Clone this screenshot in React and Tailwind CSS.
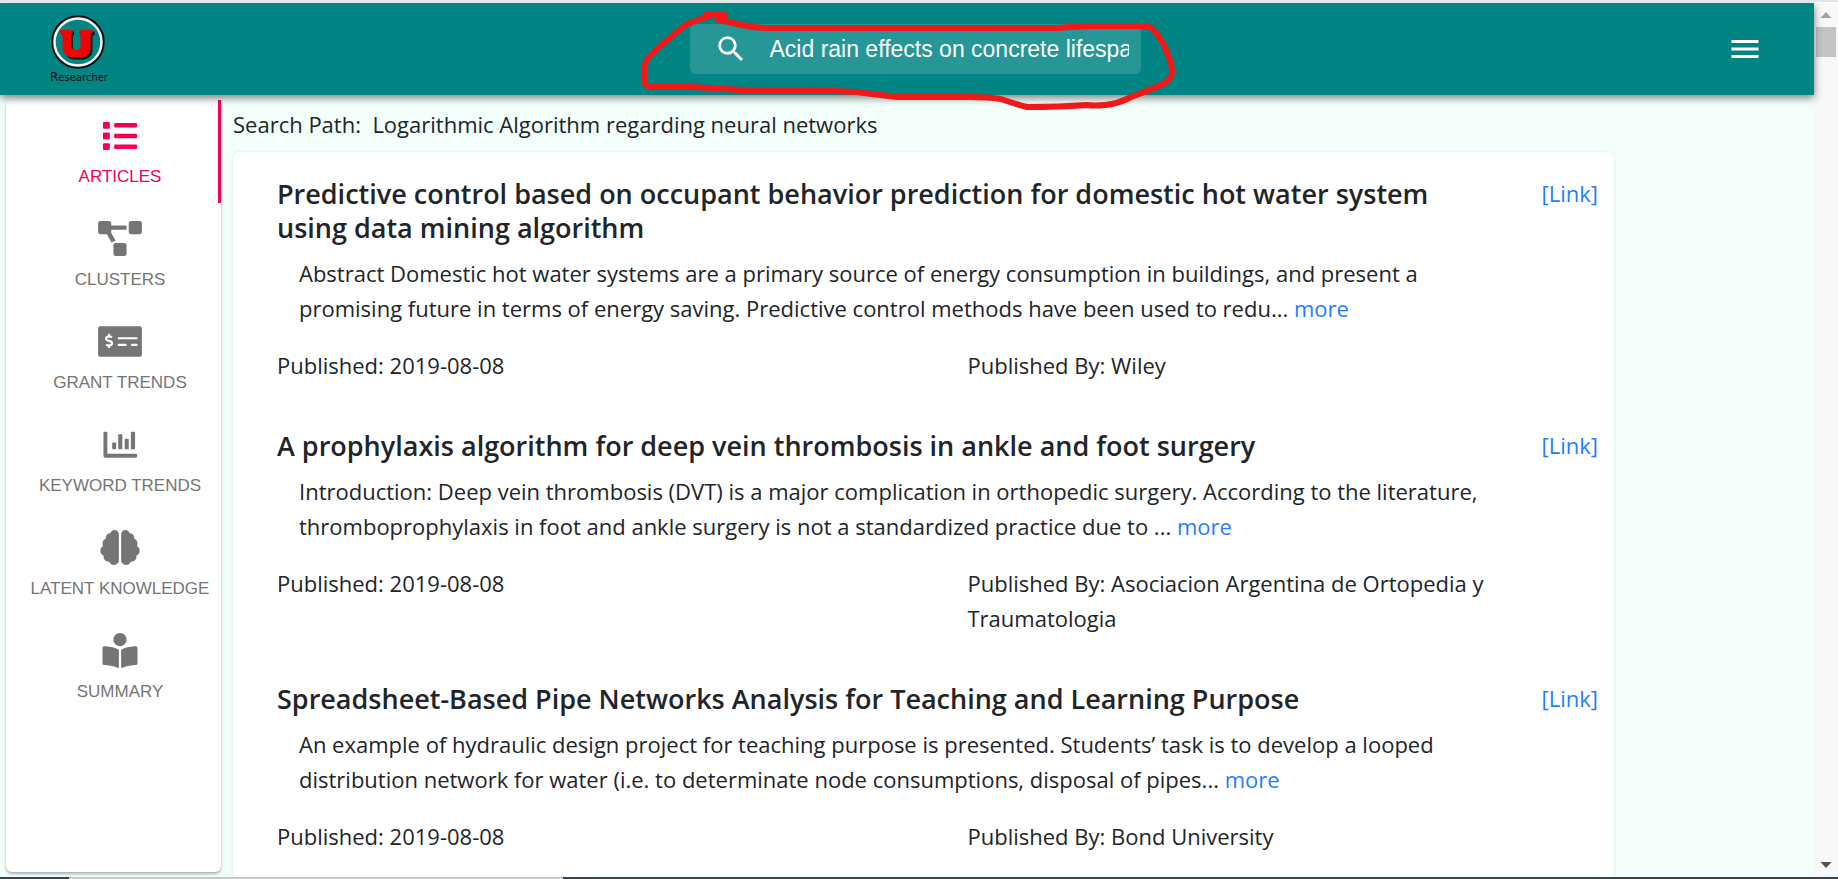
import React from "react";
import { FaProjectDiagram, FaMoneyCheckAlt, FaBrain, FaBookReader } from "react-icons/fa";
import { MdMenu, MdSearch } from "react-icons/md";

const tabs = [
  { label: "Articles", icon: ListIcon, active: true },
  { label: "Clusters", icon: FaProjectDiagram },
  { label: "Grant Trends", icon: FaMoneyCheckAlt },
  { label: "Keyword Trends", icon: ChartIcon },
  { label: "Latent Knowledge", icon: FaBrain },
  { label: "Summary", icon: FaBookReader },
];

const articles = [
  {
    title:
      "Predictive control based on occupant behavior prediction for domestic hot water system using data mining algorithm",
    abstract:
      "Abstract Domestic hot water systems are a primary source of energy consumption in buildings, and present a promising future in terms of energy saving. Predictive control methods have been used to redu...",
    date: "2019-08-08",
    publisher: "Wiley",
  },
  {
    title: "A prophylaxis algorithm for deep vein thrombosis in ankle and foot surgery",
    abstract:
      "Introduction: Deep vein thrombosis (DVT) is a major complication in orthopedic surgery. According to the literature, thromboprophylaxis in foot and ankle surgery is not a standardized practice due to ...",
    date: "2019-08-08",
    publisher: "Asociacion Argentina de Ortopedia y Traumatologia",
  },
  {
    title: "Spreadsheet-Based Pipe Networks Analysis for Teaching and Learning Purpose",
    abstract:
      "An example of hydraulic design project for teaching purpose is presented. Students’ task is to develop a looped distribution network for water (i.e. to determinate node consumptions, disposal of pipes...",
    date: "2019-08-08",
    publisher: "Bond University",
  },
];

function ListIcon({ className }) {
  return (
    <svg viewBox="0 0 36 36" className={className} fill="currentColor" aria-hidden="true">
      <rect x="0.500" y="4" width="7" height="7" rx="1" />
      <rect x="0.500" y="15" width="7" height="7" rx="1" />
      <rect x="0.500" y="26" width="7" height="7" rx="1" />
      <rect x="12" y="5.200" width="23.500" height="4.600" rx="1" />
      <rect x="12" y="16.200" width="23.500" height="4.600" rx="1" />
      <rect x="12" y="27.200" width="23.500" height="4.600" rx="1" />
    </svg>
  );
}

function ChartIcon({ className }) {
  return (
    <svg viewBox="0 0 36 36" className={className} fill="currentColor" aria-hidden="true">
      <path d="M2 5h2a1 1 0 0 1 1 1v21.400h29.500a1 1 0 0 1 1 1v2.200a1 1 0 0 1-1 1H3a2 2 0 0 1-2-2V6a1 1 0 0 1 1-1z" />
      <rect x="10" y="16" width="4" height="7" rx="0.800" />
      <rect x="16.200" y="7.500" width="4.200" height="15.500" rx="0.800" />
      <rect x="22.800" y="12" width="4.200" height="11" rx="0.800" />
      <rect x="29.200" y="5" width="4.300" height="18" rx="0.800" />
    </svg>
  );
}

function Logo() {
  return (
    <svg viewBox="0 0 64 70" className="h-[70px] w-16" role="img" aria-label="U Researcher">
      <circle cx="30" cy="28" r="25.500" fill="none" stroke="#101010" strokeWidth="2.500" />
      <circle cx="30" cy="28" r="23.500" fill="none" stroke="#f2f6f6" strokeWidth="2.500" />
      <path
        d="M14 17.500h12v3.500l-1 1v12.500l2.500 2.500h4l2-2.500V22l-1-1v-3.500h14v3.500l-2 1v14.500q-.500 7-8.500 9H25.500q-8-1.500-9-9V22l-2.500-1z"
        fill="#101010"
      />
      <path
        d="M12 16h12.500v3l-1 1v13q1 3 4.500 3t4.500-3V20l-1.500-1v-3h13.500v3l-2 1v15q-.500 6.500-7.500 8.500H22.500q-7-1.500-8-8.500V20l-2.500-1z"
        fill="#ee0505"
      />
      <text x="2" y="67" fontSize="10" fontFamily="'DejaVu Sans', sans-serif" fill="#101010">
        <tspan fontSize="12">R</tspan>
        <tspan>esearcher</tspan>
      </text>
    </svg>
  );
}

function Header() {
  return (
    <header className="relative z-10 grid h-[92px] shrink-0 grid-cols-[1fr_auto_1fr] items-center bg-[#008484] pl-4 shadow-[0_3px_8px_rgba(0,0,0,0.5)]">
      <div className="pl-8">
        <Logo />
      </div>
      <div role="search" className="flex h-[50px] w-[451px] items-center rounded-md bg-white/15 pr-3 pl-6 text-white">
        <MdSearch className="mr-5 h-[34px] w-[34px] shrink-0" aria-hidden="true" />
        <input
          type="text"
          aria-label="Search"
          defaultValue="Acid rain effects on concrete lifespan"
          className="ml-0.5 w-full min-w-0 bg-transparent text-[23px] text-white outline-none"
        />
      </div>
      <button type="button" aria-label="Menu" className="mr-[51px] justify-self-end text-white">
        <MdMenu className="h-9 w-9" />
      </button>
    </header>
  );
}

function Sidebar() {
  return (
    <nav className="mb-[5px] w-[215px] shrink-0 rounded-md bg-white shadow-[0_2px_3px_rgba(0,0,0,0.3)]">
      {tabs.map(({ label, icon: Icon, active }) => (
        <button
          key={label}
          type="button"
          className={
            "flex h-[103px] w-full flex-col items-center justify-center gap-3 border-r-[3px] pt-1 pl-4 text-[17px] leading-6 whitespace-nowrap uppercase " +
            (active ? "border-[#f50057] text-[#f50057]" : "border-transparent text-[#757575]")
          }
        >
          <Icon className="h-[35px] w-11" />
          <span>{label}</span>
        </button>
      ))}
    </nav>
  );
}

function Article({ title, abstract, date, publisher }) {
  return (
    <article>
      <div className="flex justify-between pr-4 pl-11">
        <div className="max-w-[1212px]">
          <h2 className="text-[27px] leading-[34px] font-semibold">{title}</h2>
          <p className="mt-[11px] pl-[22px] text-[22px] leading-[35px]">
            {abstract}{" "}
            <a href="#more" className="text-[#1f80ff]">
              more
            </a>
          </p>
        </div>
        <a href="#link" className="text-[22px] leading-8 text-[#1f80ff]">
          [Link]
        </a>
      </div>
      <div className="mt-[22px] grid grid-cols-2 text-[22px] leading-[35px]">
        <p className="pl-11">{`Published: ${date}`}</p>
        <p className="pr-28 pl-11">{`Published By: ${publisher}`}</p>
      </div>
    </article>
  );
}

function Scrollbar() {
  return (
    <div className="flex w-6 shrink-0 flex-col items-center justify-between bg-[#f8f8f8] pt-2 pb-2" aria-hidden="true">
      <div className="flex flex-col items-center gap-2">
        <svg viewBox="0 0 12 8" className="h-2 w-3">
          <path d="M0.500 7L6 1l5.500 6z" fill="#a3a3a3" />
        </svg>
        <div className="h-[30px] w-5 bg-[#c4c4c4]" />
      </div>
      <svg viewBox="0 0 12 8" className="h-2 w-3">
        <path d="M0.500 1L6 7l5.500-6z" fill="#505050" />
      </svg>
    </div>
  );
}

function Annotation() {
  return (
    <svg viewBox="640 0 540 115" className="pointer-events-none absolute top-0 left-[640px] z-20 h-[115px] w-[540px]" aria-hidden="true">
      <path
        d="M706 12H719Q726 12 725 16L718 18Q730 20 742 23Q756 26 768 26H1057Q1070 25 1086 24H1145Q1152 25 1155 30Q1163 40 1166 48Q1172 62 1172 69Q1172 76 1165 81Q1150 88 1131 95Q1118 102 1105 103Q1095 104 1086 103Q1060 105 1027 105Q1018 103 1001 97Q988 95 971 95H897Q880 93 857 90L810 88H742L694 85H650Q643 83 644 76Q643 63 648 56Q660 43 687 22Q700 17 712 13"
        fill="none"
        stroke="#f01818"
        strokeWidth="6"
        strokeLinecap="round"
        strokeLinejoin="round"
      />
    </svg>
  );
}

export default function App() {
  return (
    <div className="relative flex h-screen flex-col overflow-hidden border-t-2 border-[#dfe6ee] bg-white font-['Liberation_Sans',Arial,sans-serif] text-[#212529]">
      <div className="flex min-h-0 flex-1 pt-px">
        <div className="flex min-w-0 flex-1 flex-col bg-[#f2fffa]">
          <Header />
          <div className="flex min-h-0 flex-1 gap-3 pt-[5px] pl-[6px]">
            <Sidebar />
            <main className="min-w-0 flex-1 font-['Open_Sans','Noto_Sans',sans-serif]">
              <p className="mt-[7px] mb-[10px] text-[22px] leading-[35px]">
                Search Path:&nbsp; Logarithmic Algorithm regarding neural networks
              </p>
              <section className="mr-[200px] flex flex-col gap-[46px] rounded-md bg-white pt-[25px] pb-11 shadow-[0_0_3px_rgba(0,80,0,0.12)]">
                {articles.map((a) => (
                  <Article key={a.title} {...a} />
                ))}
              </section>
            </main>
          </div>
        </div>
        <Scrollbar />
      </div>
      <div className="flex h-0.5 shrink-0 bg-[#36454f]">
        <div className="ml-[69px] w-[494px] bg-[#c4c8c8]" />
      </div>
      <Annotation />
    </div>
  );
}
